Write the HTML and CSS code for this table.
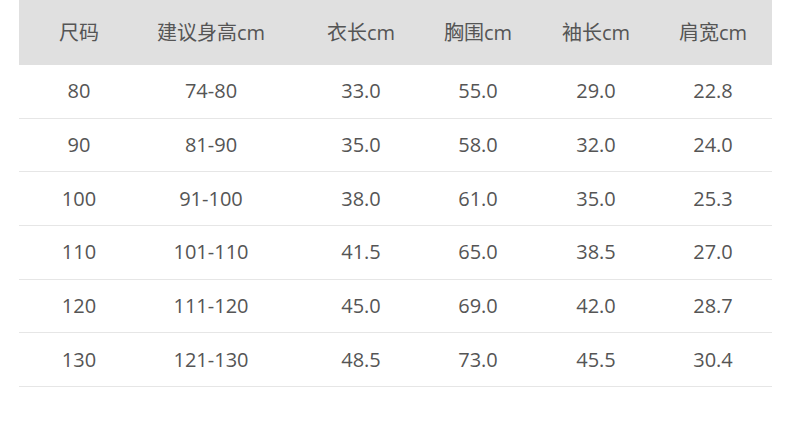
FILE: index.html
```html
<!DOCTYPE html>
<html lang="zh-CN">
<head>
<meta charset="utf-8">
<title>尺码表</title>
<link rel="stylesheet" href="styles.css">
</head>
<body>
<div class="size-table">
  <div class="row head">
    <div class="cell">尺码</div><div class="cell">建议身高cm</div><div class="cell">衣长cm</div><div class="cell">胸围cm</div><div class="cell">袖长cm</div><div class="cell">肩宽cm</div>
  </div>
  <div class="row">
    <div class="cell">80</div><div class="cell">74-80</div><div class="cell">33.0</div><div class="cell">55.0</div><div class="cell">29.0</div><div class="cell">22.8</div>
  </div>
  <div class="row">
    <div class="cell">90</div><div class="cell">81-90</div><div class="cell">35.0</div><div class="cell">58.0</div><div class="cell">32.0</div><div class="cell">24.0</div>
  </div>
  <div class="row">
    <div class="cell">100</div><div class="cell">91-100</div><div class="cell">38.0</div><div class="cell">61.0</div><div class="cell">35.0</div><div class="cell">25.3</div>
  </div>
  <div class="row">
    <div class="cell">110</div><div class="cell">101-110</div><div class="cell">41.5</div><div class="cell">65.0</div><div class="cell">38.5</div><div class="cell">27.0</div>
  </div>
  <div class="row">
    <div class="cell">120</div><div class="cell">111-120</div><div class="cell">45.0</div><div class="cell">69.0</div><div class="cell">42.0</div><div class="cell">28.7</div>
  </div>
  <div class="row">
    <div class="cell">130</div><div class="cell">121-130</div><div class="cell">48.5</div><div class="cell">73.0</div><div class="cell">45.5</div><div class="cell">30.4</div>
  </div>
</div>
</body>
</html>
```

FILE: styles.css
```css
html, body {
  margin: 0;
  padding: 0;
  background: #ffffff;
}

body {
  font-family: "Open Sans", "Noto Sans CJK SC", sans-serif;
  color: #555555;
  font-size: 20px;
}

.size-table {
  margin-left: 19px;
  width: 753px;
}

.row {
  display: grid;
  grid-template-columns: 120px 144px 156px 78px 158px 76px 1fr;
  align-items: center;
  height: 52.7px;
  border-bottom: 1px solid #e6e6e6;
}

.row.head {
  height: 65px;
  background: #e0e0e0;
  border-bottom: none;
}

.cell {
  text-align: center;
  white-space: nowrap;
  line-height: 1;
}

.head .cell {
  font-size: 20px;
}
```
